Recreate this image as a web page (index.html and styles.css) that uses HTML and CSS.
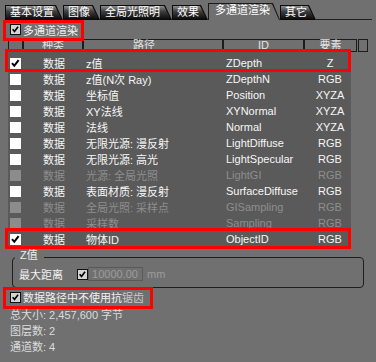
FILE: index.html
```html
<!DOCTYPE html>
<html>
<head>
<meta charset="utf-8">
<link rel="stylesheet" href="styles.css">
</head>
<body>
<div class="panel">
  <div class="tabs">
    <div class="tab w1"><span class="tab-in">基本设置</span></div>
    <div class="tab w2"><span class="tab-in">图像</span></div>
    <div class="tab w3"><span class="tab-in">全局光照明</span></div>
    <div class="tab w4"><span class="tab-in">效果</span></div>
    <div class="tab w5 active"><span class="tab-in">多通道渲染</span></div>
    <div class="tab w6"><span class="tab-in">其它</span></div>
    <div class="tab-fill"></div>
  </div>

  <div class="opt top-opt">
    <span class="cb cb-grey"><svg viewBox="0 0 11 11"><path d="M2 5.2 L4.3 7.8 L8.6 2.2"/></svg></span>
    <span>多通道渲染</span>
  </div>

  <div class="table">
    <div class="thead">
      <div class="th h1"></div>
      <div class="th h2">种类</div>
      <div class="th h3">路径</div>
      <div class="th h4">ID</div>
      <div class="th h5">要素</div>
      <div class="th h6"></div>
    </div>
    <div class="tbody">
      <div class="row"><span class="c1"><span class="cb"><svg viewBox="0 0 11 11"><path d="M2 5.2 L4.3 7.8 L8.6 2.2"/></svg></span></span><span class="c2">数据</span><span class="c3">z值</span><span class="c4">ZDepth</span><span class="c5">Z</span></div>
      <div class="row"><span class="c1"><span class="cb"></span></span><span class="c2">数据</span><span class="c3">z值(N次 Ray)</span><span class="c4">ZDepthN</span><span class="c5">RGB</span></div>
      <div class="row"><span class="c1"><span class="cb"></span></span><span class="c2">数据</span><span class="c3">坐标值</span><span class="c4">Position</span><span class="c5">XYZA</span></div>
      <div class="row"><span class="c1"><span class="cb"></span></span><span class="c2">数据</span><span class="c3">XY法线</span><span class="c4">XYNormal</span><span class="c5">XYZA</span></div>
      <div class="row"><span class="c1"><span class="cb"></span></span><span class="c2">数据</span><span class="c3">法线</span><span class="c4">Normal</span><span class="c5">XYZA</span></div>
      <div class="row"><span class="c1"><span class="cb"></span></span><span class="c2">数据</span><span class="c3">无限光源: 漫反射</span><span class="c4">LightDiffuse</span><span class="c5">RGB</span></div>
      <div class="row"><span class="c1"><span class="cb"></span></span><span class="c2">数据</span><span class="c3">无限光源: 高光</span><span class="c4">LightSpecular</span><span class="c5">RGB</span></div>
      <div class="row dis"><span class="c1"><span class="cb"></span></span><span class="c2">数据</span><span class="c3">光源: 全局光照</span><span class="c4">LightGI</span><span class="c5">RGB</span></div>
      <div class="row"><span class="c1"><span class="cb"></span></span><span class="c2">数据</span><span class="c3">表面材质: 漫反射</span><span class="c4">SurfaceDiffuse</span><span class="c5">RGB</span></div>
      <div class="row dis"><span class="c1"><span class="cb"></span></span><span class="c2">数据</span><span class="c3">全局光照: 采样点</span><span class="c4">GISampling</span><span class="c5">RGB</span></div>
      <div class="row dis"><span class="c1"><span class="cb"></span></span><span class="c2">数据</span><span class="c3">采样数</span><span class="c4">Sampling</span><span class="c5">RGB</span></div>
      <div class="row"><span class="c1"><span class="cb"><svg viewBox="0 0 11 11"><path d="M2 5.2 L4.3 7.8 L8.6 2.2"/></svg></span></span><span class="c2">数据</span><span class="c3">物体ID</span><span class="c4">ObjectID</span><span class="c5">RGB</span></div>
    </div>
  </div>

  <div class="group">
    <div class="legend">Z值</div>
    <div class="field">
      <span class="field-label">最大距离</span>
      <span class="cb cb-grey"><svg viewBox="0 0 11 11"><path d="M2 5.2 L4.3 7.8 L8.6 2.2"/></svg></span>
      <span class="num">10000.00</span>
      <span class="unit">mm</span>
    </div>
  </div>

  <div class="opt aa-opt">
    <span class="cb cb-grey"><svg viewBox="0 0 11 11"><path d="M2 5.2 L4.3 7.8 L8.6 2.2"/></svg></span>
    <span>数据路径中不使用抗<span class="soft">锯齿</span></span>
  </div>

  <div class="info">
    <div>总大小: 2,457,600 字节</div>
    <div>图层数: 2</div>
    <div>通道数: 4</div>
  </div>

  <div class="mark m1"></div>
  <div class="mark m2"></div>
  <div class="mark m3"></div>
  <div class="mark m4"></div>
</div>
</body>
</html>
```
FILE: styles.css
```css
* { box-sizing: border-box; }

body {
  margin: 0;
  width: 376px;
  height: 362px;
  overflow: hidden;
  background: #707070;
  font-family: "Liberation Sans", "Noto Sans CJK SC", sans-serif;
  font-size: 11px;
  color: #f2f2f2;
}

.panel {
  position: relative;
  height: 362px;
}

/* tabs */
.tabs {
  display: flex;
  align-items: flex-end;
  height: 20px;
  padding-left: 5px;
}
.tab {
  flex: none;
  height: 15px;
  padding: 1px 1px 0 1px;
  background: #0c0c0c;
  clip-path: polygon(0 0, calc(100% - 7px) 0, 100% 100%, 0 100%);
}
.tab-in {
  display: block;
  height: 100%;
  padding-left: 4px;
  line-height: 13px;
  white-space: nowrap;
  color: #ffffff;
  background: linear-gradient(#8e8e8e, #3c3c3c 40%, #060606);
  clip-path: polygon(0 0, calc(100% - 7px) 0, 100% 100%, 0 100%);
}
.tab.active {
  height: 17px;
  background: #1a1a1a;
}
.tab.active .tab-in {
  background: #707070;
  padding-left: 6px;
}
.w1 { width: 58px; }
.w2 { width: 37px; }
.w3 { width: 72px; }
.w4 { width: 36px; }
.w5 { width: 72px; }
.w6 { width: 36px; }
.tab-fill {
  flex: 1;
  height: 2px;
  margin-right: 4px;
  border-bottom: 1px solid #1e1e1e;
}

/* checkboxes */
.cb {
  flex: none;
  display: inline-block;
  width: 11px;
  height: 11px;
  background: #ffffff;
}
.cb svg {
  display: block;
  width: 11px;
  height: 11px;
}
.cb path {
  fill: none;
  stroke: #000;
  stroke-width: 2;
}
.cb-grey {
  background: #d4d4d4;
  border: 1px solid #111;
}
.cb-grey svg {
  width: 9px;
  height: 9px;
}
.row.dis .cb {
  background: #8c8c8c;
}

/* option rows */
.opt {
  display: flex;
  align-items: center;
  gap: 2px;
  padding-left: 10px;
}
.top-opt {
  height: 19px;
}
.aa-opt {
  height: 16px;
  margin-top: 1px;
}
.soft { color: #c8c8c8; }

/* table */
.table {
  margin-left: 8px;
}
.thead {
  display: flex;
  height: 13px;
}
.th {
  flex: none;
  height: 13px;
  border: 1px solid #1c1c1c;
  line-height: 11px;
  text-align: center;
  color: #e4e4e4;
}
.h1 { width: 15px; }
.h2 { width: 60px; }
.h3 { width: 140px; text-align: left; padding-left: 49px; }
.h4 { width: 81px; }
.h5 { width: 53px; }
.h6 { width: 10px; margin-left: 1px; }

.tbody {
  width: 343px;
  height: 196px;
  padding-top: 3px;
  background: #5a5a5a;
}
.row {
  display: flex;
  align-items: center;
  height: 16px;
  color: #f6f6f6;
  white-space: nowrap;
}
.row.dis { color: #8e8e8e; }
.c1 { flex: none; width: 15px; padding-left: 2px; display: flex; }
.c2 { flex: none; width: 60px; padding-left: 20px; }
.c3 { flex: none; width: 140px; padding-left: 3px; }
.c4 { flex: none; width: 81px; padding-left: 3px; }
.c5 { flex: none; width: 47px; padding-left: 5px; text-align: center; }

/* group box */
.group {
  margin: 9px 12px 0 12px;
  padding: 0 0 6px 2px;
  border: 1px solid #1e1e1e;
  border-radius: 4px;
}
.legend {
  width: fit-content;
  margin-top: -8px;
  padding: 0 6px 0 5px;
  line-height: 11px;
  background: #707070;
  color: #eeeeee;
}
.field {
  display: flex;
  align-items: center;
  height: 14px;
  margin-top: 6px;
  padding-left: 4px;
}
.field-label { width: 44px; flex: none; }
.field .cb { margin-left: 14px; }
.num {
  flex: none;
  width: 55px;
  height: 14px;
  border: 1px solid #595959;
  padding-right: 4px;
  line-height: 12px;
  text-align: right;
  color: #9c9c9c;
}
.unit {
  margin-left: 4px;
  color: #9c9c9c;
}

/* info */
.info {
  margin-top: 2px;
  padding-left: 10px;
  line-height: 16px;
  color: #dcdcdc;
}

/* red annotation boxes */
.mark {
  position: absolute;
  border: 3px solid #ff0000;
}
.m1 { left: 3px; top: 20px; width: 81px; height: 21px; }
.m2 { left: 5px; top: 49px; width: 346px; height: 23px; }
.m3 { left: 5px; top: 228px; width: 346px; height: 21px; }
.m4 { left: 3px; top: 287px; width: 150px; height: 22px; }
```
